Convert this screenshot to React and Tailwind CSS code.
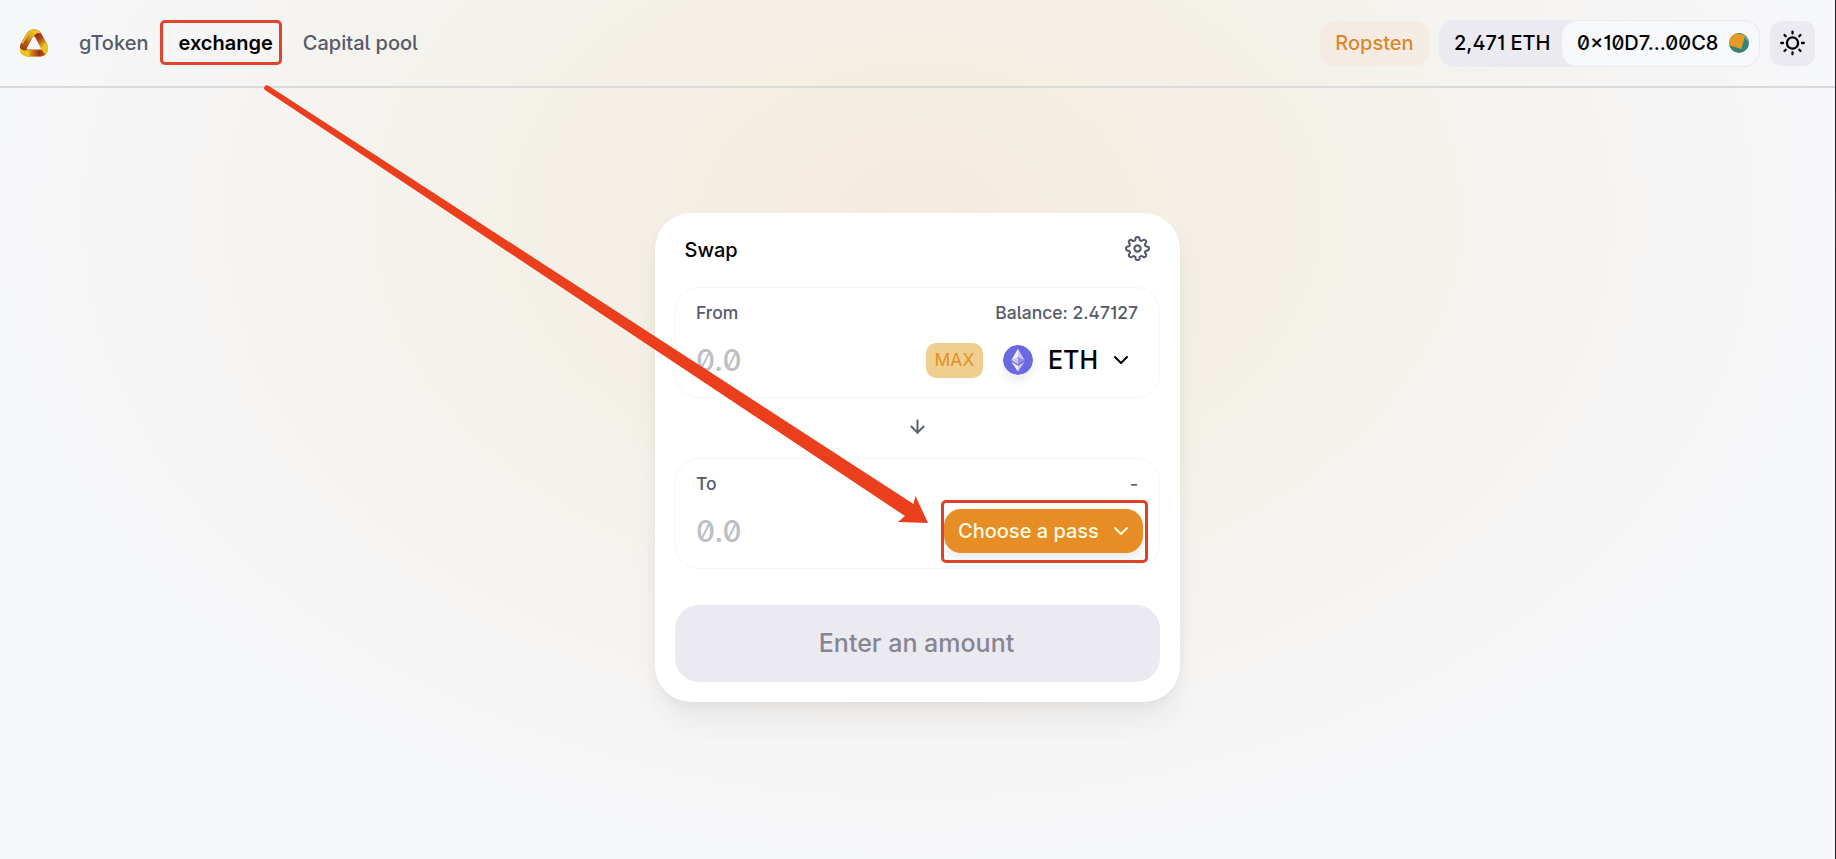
import { ChevronDown, ArrowDown } from "lucide-react";
import { FiSettings } from "react-icons/fi";

function Logo() {
  return (
    <svg className="h-7 w-7" viewBox="0 0 28 28" fill="none">
      <defs>
        <linearGradient id="la" x1="1" y1="19" x2="16" y2="2" gradientUnits="userSpaceOnUse">
          <stop offset="0" stopColor="#a33a14" />
          <stop offset=".35" stopColor="#b95a1a" />
          <stop offset=".7" stopColor="#e0ac24" />
          <stop offset="1" stopColor="#f0c722" />
        </linearGradient>
        <linearGradient id="lb" x1="15" y1="5" x2="27" y2="20" gradientUnits="userSpaceOnUse">
          <stop offset="0" stopColor="#8f2410" />
          <stop offset=".35" stopColor="#b0451a" />
          <stop offset=".7" stopColor="#dca322" />
          <stop offset="1" stopColor="#eccb25" />
        </linearGradient>
        <linearGradient id="lc" x1="2" y1="22" x2="25" y2="24" gradientUnits="userSpaceOnUse">
          <stop offset="0" stopColor="#eec922" />
          <stop offset=".3" stopColor="#dda01e" />
          <stop offset=".75" stopColor="#a02f14" />
          <stop offset="1" stopColor="#c0601a" />
        </linearGradient>
        <clipPath id="lo">
          <path
            clipRule="evenodd"
            d="M6.8 4.6Q9.2 .4 14 .4T21.2 4.6L27 14.5Q28.8 18.5 27.6 22.6 25.8 27.4 20.5 27.4H7.5Q2.2 27.4.4 22.6-.8 18.5 1 14.5ZM14 7.4Q13 7.4 12.4 8.6L6.8 19Q6.2 20.4 7.4 20.4H21.4L15.4 8.4Q15 7.4 14 7.4Z"
          />
        </clipPath>
      </defs>
      <g clipPath="url(#lo)">
        <rect width="28" height="28" fill="url(#lb)" />
        <path d="M0 16 7 20.4H21.4L28 28H0Z" fill="url(#lc)" />
        <path d="M21 20 24.5 14 29 15V27H26Q24.5 23 21 20Z" fill="#e8c226" />
        <path d="M0 0H20L21.2 4.6Q16 2.5 13.5 8.6L7 20.4Q5.5 22 1 22L-1 20Z" fill="url(#la)" />
        <path d="M0 19Q3 22.5 9 22L10 28H0Z" fill="#ebc524" />
        <path d="M2 14.5 7.6 5Q10 1 14 1" stroke="#e9bd24" strokeWidth="1.8" />
      </g>
    </svg>
  );
}

function EthIcon() {
  return (
    <svg className="h-[30px] w-[30px] rounded-full shadow-[0_6px_10px_rgba(0,0,0,0.08)]" viewBox="0 0 30 30">
      <circle cx="15" cy="15" r="15" fill="#6a69e0" />
      <path d="M15 3.8 8.3 15.2 15 12.2Z" fill="#f3f3fd" />
      <path d="M15 3.8 21.7 15.2 15 12.2Z" fill="#c9c8f5" />
      <path d="M15 12.2 8.3 15.2 15 19.3Z" fill="#c9c8f5" />
      <path d="M15 12.2 21.7 15.2 15 19.3Z" fill="#9290ea" />
      <path d="M8.3 16.8 15 20.8V26.4Z" fill="#f3f3fd" />
      <path d="M21.7 16.8 15 20.8V26.4Z" fill="#c9c8f5" />
    </svg>
  );
}

function Avatar() {
  return (
    <svg className="h-5 w-5" viewBox="0 0 20 20">
      <defs>
        <clipPath id="av">
          <circle cx="10" cy="10" r="10" />
        </clipPath>
      </defs>
      <g clipPath="url(#av)">
        <rect width="20" height="20" fill="#348373" />
        <path d="M15 0h5v9l-4-3z" fill="#4fa3dc" />
        <path d="M-1 -2 7 .8 16.3 1.8 12.4 16 -4 11z" fill="#e69c24" />
      </g>
    </svg>
  );
}

function Panel({ label, info, children }) {
  return (
    <div className="flex h-[111px] flex-col rounded-[24px] border border-[#f5f5f8] pt-[13px] pr-[21px] pl-[20px]">
      <div className="flex h-6 items-center justify-between text-[17.5px] font-medium text-[#565a69]">
        <span>{label}</span>
        <span>{info}</span>
      </div>
      <div className="mt-[12px] flex h-[46px] items-center justify-between">
        <span className="pt-px text-[29.5px] font-medium text-[#bdbfc6]">0.0</span>
        {children}
      </div>
    </div>
  );
}

export default function App() {
  return (
    <div className="relative flex h-[859px] w-[1836px] flex-col overflow-hidden border-r border-[#26262b] bg-[#f6f7f9] bg-[radial-gradient(918px_640px_at_918px_215px,#f5ebdf_0%,#f4efe4_30%,#f4f2ec_55%,#f6f5f5_83%,#f6f7f9_100%)] font-['Inter',sans-serif] [font-feature-settings:'ss01','ss02','cv01','cv03']">
      <header className="flex h-[88px] shrink-0 items-center border-b-2 border-[#dadada] pr-5 pl-5 text-[20px] font-medium">
        <Logo />
        <nav className="ml-[31px] flex items-center text-[#565a69]">
          <span>gToken</span>
          <span className="ml-[30px] font-semibold text-black">exchange</span>
          <span className="ml-[30px]">Capital pool</span>
        </nav>
        <div className="ml-auto flex items-center">
          <div className="flex h-[45px] w-[109px] items-center justify-center rounded-[14px] bg-[#f4ece2] text-[#dc8630]">Ropsten</div>
          <div className="ml-[10px] flex h-[47px] w-[321px] items-center rounded-[16px] bg-[#ebeaf1]">
            <span className="w-[122px] pl-[15px] whitespace-nowrap text-black">2,471 ETH</span>
            <div className="flex h-full w-[199px] items-center justify-between rounded-[16px] border border-[#ebeaf1] bg-[#f7f8fa] pr-[10px] pl-[15px] text-black">
              <span>0×10D7...00C8</span>
              <Avatar />
            </div>
          </div>
          <div className="ml-[10px] flex h-[45px] w-[45px] items-center justify-center rounded-[12px] bg-[#ebeaf1]">
            <svg className="h-[26px] w-[26px]" viewBox="0 0 26 26" fill="none" stroke="#000" strokeWidth="2.3" strokeLinecap="round">
              <circle cx="12.5" cy="13" r="5.6" />
              <path d="M12.5 1.7v1.8M12.5 22.5v1.8M1.2 13h1.8M22 13h1.8M4.5 5l1.2 1.2M19.3 19.8l1.2 1.2M4.5 21l1.2-1.2M19.3 6.2l1.2-1.2" />
            </svg>
          </div>
        </div>
      </header>

      <main className="mt-[125px] ml-[655px] flex h-[489px] w-[525px] shrink-0 flex-col rounded-[36px] bg-white px-5 shadow-[0_0_1px_rgba(0,0,0,0.01),0_5px_9px_rgba(0,0,0,0.04),0_19px_28px_rgba(0,0,0,0.04),0_28px_37px_rgba(0,0,0,0.01)]">
        <div className="flex h-[74px] items-center justify-between pr-[10px] pl-[9.5px]">
          <span className="text-[20px] font-medium text-black">Swap</span>
          <FiSettings className="mb-[3px] h-[25px] w-[25px] text-[#565a69]" />
        </div>
        <Panel label="From" info="Balance: 2.47127">
          <div className="mr-[5px] flex items-center">
            <span className="flex h-[35px] w-[57px] items-center justify-center rounded-[10px] bg-[#efcf90] text-[17.5px] text-[#e68e22]">MAX</span>
            <div className="ml-5 flex items-center">
              <EthIcon />
              <span className="ml-[15px] pt-px text-[25px] font-medium text-black">ETH</span>
              <ChevronDown className="ml-[11px] h-6 w-6 text-black" />
            </div>
          </div>
        </Panel>
        <div className="flex h-[60px] items-center justify-center pr-px pb-1">
          <ArrowDown className="h-[21px] w-[21px] text-[#565a69]" strokeWidth={2.2} />
        </div>
        <Panel label="To" info="-">
          <div className="relative -mr-[5px] flex h-[44px] w-[199px] items-center rounded-[17px] bg-[#e68d25] pl-[14px] text-[20px] font-medium text-[#fffbe0] shadow-[0_7px_12px_rgba(0,0,0,0.08)]">
            <span className="whitespace-nowrap">Choose a pass</span>
            <ChevronDown className="ml-[10px] h-6 w-6" />
            <span className="absolute -top-[9px] -right-[5px] h-[63px] w-[207px] rounded-[5px] border-3 border-[#df4128]" />
          </div>
        </Panel>
        <div className="mt-[36px] flex h-[77px] items-center justify-center rounded-[24px] bg-[#ebeaf1] pr-[2px] text-[25px] font-medium text-[#868692]">Enter an amount</div>
      </main>

      <span className="absolute top-[20px] left-[160px] h-[45px] w-[122px] rounded-[5px] border-3 border-[#e0452b]" />
      <svg className="pointer-events-none absolute top-0 left-0 h-[859px] w-[1836px]" viewBox="0 0 1836 859">
        <path d="M268.5 85.8 913.5 504 915.5 496 928 523 898 522 905 516 265.3 90.3A2.7 2.7 0 0 1 268.5 85.8Z" fill="#ea3e1c" />
      </svg>
    </div>
  );
}
